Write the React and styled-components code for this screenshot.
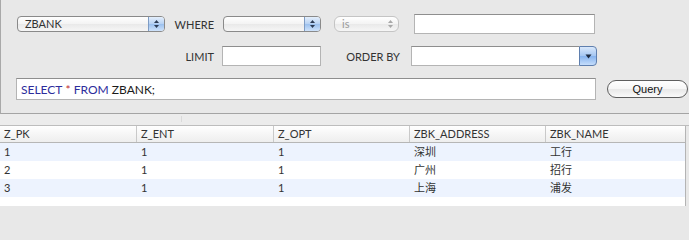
import React from "react";
import styled, { createGlobalStyle, css } from "styled-components";

const GlobalStyle = createGlobalStyle`
  html, body {
    margin: 0;
    padding: 0;
    background: #e8e8e8;
  }
  body {
    font-family: Lato, "Open Sans", "Noto Sans CJK SC", sans-serif;
    font-size: 11px;
    color: #333;
  }
`;

const Window = styled.div`
  width: 689px;
  height: 206px;
  display: flex;
  flex-direction: column;
  overflow: hidden;
  background: #e8e8e8;
`;

const TopPanel = styled.div`
  display: flex;
  flex-direction: column;
  gap: 12px;
  padding: 14px 0 13px 0;
  border-left: 1px solid #a9a9a9;
  border-bottom: 1px solid #a4a4a4;
  background: #e8e8e8;
`;

const Row = styled.div`
  display: flex;
  align-items: center;
  height: ${(p) => p.h || 20}px;
  padding-left: ${(p) => p.pl || 0}px;
`;

const Label = styled.div`
  width: ${(p) => p.w}px;
  padding-right: ${(p) => p.pr}px;
  box-sizing: border-box;
  text-align: right;
  color: #333;
  font-size: 11px;
`;

const Popup = styled.div`
  width: ${(p) => p.w}px;
  height: 16px;
  margin-left: ${(p) => p.ml || 0}px;
  box-sizing: border-box;
  display: flex;
  align-items: stretch;
  border: 1px solid ${(p) => (p.disabled ? "#c4c4c4" : "#8a8a8a")};
  border-radius: ${(p) => (p.disabled ? 6 : 4)}px;
  background: linear-gradient(#ffffff, #f3f3f3 50%, #e9e9e9 51%, #f6f6f6);
  overflow: hidden;
  color: ${(p) => (p.disabled ? "#9a9a9a" : "#333")};
  font-size: 11px;
`;

const PopupText = styled.div`
  flex: 1;
  padding-left: 7px;
  line-height: 14px;
`;

const PopupArrows = styled.div`
  width: 15px;
  display: flex;
  align-items: center;
  justify-content: center;
  border-left: 1px solid ${(p) => (p.disabled ? "transparent" : "#7e9cc4")};
  ${(p) =>
    p.disabled
      ? css`
          background: transparent;
        `
      : css`
          background: linear-gradient(#e4effc, #b6d1f3 50%, #9bc0ee 51%, #cfe3fb);
        `}
`;

const TextField = styled.div`
  width: ${(p) => p.w}px;
  height: ${(p) => p.h || 20}px;
  margin-left: ${(p) => p.ml || 0}px;
  box-sizing: border-box;
  background: #fff;
  border: 1px solid #b4b4b4;
  border-top-color: #8e8e8e;
  display: flex;
  align-items: center;
  padding-left: 4px;
  font-size: 12px;
`;

const Combo = styled.div`
  width: ${(p) => p.w}px;
  height: 20px;
  display: flex;
`;

const ComboField = styled.div`
  flex: 1;
  background: #fff;
  border: 1px solid #b4b4b4;
  border-top-color: #8e8e8e;
  border-right: none;
`;

const ComboButton = styled.div`
  width: 16px;
  border: 1px solid #5f7fae;
  border-radius: 0 4px 4px 0;
  background: linear-gradient(#d9e8fb, #a4c6f2 50%, #86b3ee 51%, #c5ddfb);
  display: flex;
  align-items: center;
  justify-content: center;
`;

const Keyword = styled.span`
  color: ${(p) => p.c};
`;

const QueryButton = styled.div`
  width: 81px;
  height: 18px;
  margin-left: 11px;
  box-sizing: border-box;
  border: 1px solid #5e5e5e;
  border-radius: 9px / 9px;
  background: linear-gradient(#ffffff, #f6f6f6 50%, #e8e8e8 51%, #fafafa);
  display: flex;
  align-items: center;
  justify-content: center;
  font-family: "Liberation Sans", Arial, sans-serif;
  font-size: 11px;
  color: #111;
`;

const Splitter = styled.div`
  height: 11px;
  background: #ececec;
  border-bottom: 1px solid #bdbdbd;
  position: relative;
`;

const Grip = styled.div`
  position: absolute;
  left: 181px;
  top: 2px;
  width: 1px;
  height: 6px;
  background: #dadada;
`;

const TableArea = styled.div`
  flex: 1;
  display: flex;
  background: #e8e8e8;
`;

const Table = styled.div`
  width: 685px;
  background: #fff;
  border-right: 1px solid #b4b4b4;
  display: flex;
  flex-direction: column;
`;

const cols = [137, 137, 136, 136, 139];

const HeaderRow = styled.div`
  display: grid;
  grid-template-columns: ${cols.map((c) => c + "px").join(" ")};
  height: 16px;
  border-bottom: 1px solid #b6b6b6;
  background: linear-gradient(#ffffff, #f6f6f6 50%, #eeeeee);
`;

const HeaderCell = styled.div`
  padding-left: 4px;
  line-height: 16px;
  color: #333;
  border-right: 1px solid #c9c9c9;
  &:last-child {
    border-right: none;
  }
`;

const DataRow = styled.div`
  display: grid;
  grid-template-columns: ${cols.map((c) => c + "px").join(" ")};
  height: 18px;
  background: ${(p) => (p.alt ? "#edf3fe" : "#ffffff")};
`;

const Cell = styled.div`
  padding-left: 4px;
  line-height: 18px;
  color: #333;
  font-family: Lato, "Noto Sans CJK SC", sans-serif;
`;

const Arrows = ({ color }) => (
  <svg width="7" height="10" viewBox="0 0 7 10">
    <path d="M3.5 1 L6 4 L1 4 Z" fill={color} />
    <path d="M3.5 9 L6 6 L1 6 Z" fill={color} />
  </svg>
);

const DownArrow = () => (
  <svg width="7" height="5" viewBox="0 0 7 5">
    <path d="M0.5 0.5 L6.5 0.5 L3.5 4.5 Z" fill="#1d2a40" />
  </svg>
);

const headers = ["Z_PK", "Z_ENT", "Z_OPT", "ZBK_ADDRESS", "ZBK_NAME"];
const rows = [
  ["1", "1", "1", "深圳", "工行"],
  ["2", "1", "1", "广州", "招行"],
  ["3", "1", "1", "上海", "浦发"],
];

export default function App() {
  return (
    <Window>
      <GlobalStyle />
      <TopPanel>
        <Row pl={16}>
          <Popup w={148}>
            <PopupText>ZBANK</PopupText>
            <PopupArrows>
              <Arrows color="#2c3c55" />
            </PopupArrows>
          </Popup>
          <Label w={58} pr={9}>WHERE</Label>
          <Popup w={98}>
            <PopupText />
            <PopupArrows>
              <Arrows color="#2c3c55" />
            </PopupArrows>
          </Popup>
          <Popup w={65} ml={13} disabled>
            <PopupText>is</PopupText>
            <PopupArrows disabled>
              <Arrows color="#a8a8a8" />
            </PopupArrows>
          </Popup>
          <TextField w={181} ml={15} />
        </Row>
        <Row pl={16}>
          <Label w={205} pr={8}>LIMIT</Label>
          <TextField w={99} />
          <Label w={90} pr={11}>ORDER BY</Label>
          <Combo w={186}>
            <ComboField />
            <ComboButton>
              <DownArrow />
            </ComboButton>
          </Combo>
        </Row>
        <Row pl={15} h={22}>
          <TextField w={580} h={22}>
            <Keyword c="#2d2d9c">SELECT</Keyword>
            &nbsp;<Keyword c="#c4302e">*</Keyword>&nbsp;
            <Keyword c="#2d2d9c">FROM</Keyword>
            &nbsp;<Keyword c="#1a1a1a">ZBANK;</Keyword>
          </TextField>
          <QueryButton>Query</QueryButton>
        </Row>
      </TopPanel>
      <Splitter>
        <Grip />
      </Splitter>
      <TableArea>
        <Table>
          <HeaderRow>
            {headers.map((h) => (
              <HeaderCell key={h}>{h}</HeaderCell>
            ))}
          </HeaderRow>
          {rows.map((r, i) => (
            <DataRow key={i} alt={i % 2 === 0}>
              {r.map((c, j) => (
                <Cell key={j}>{c}</Cell>
              ))}
            </DataRow>
          ))}
        </Table>
      </TableArea>
    </Window>
  );
}
